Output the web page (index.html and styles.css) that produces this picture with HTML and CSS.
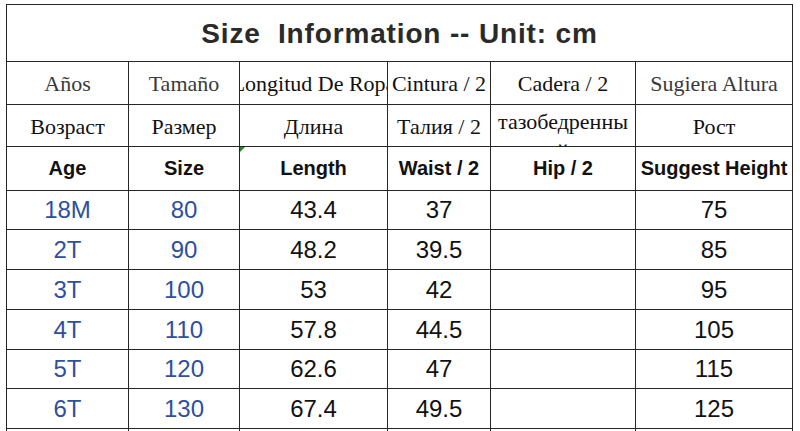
FILE: index.html
```html
<!DOCTYPE html>
<html>
<head>
<meta charset="utf-8">
<link rel="stylesheet" href="styles.css">
</head>
<body>
<div class="sheet">
  <div class="cell title r-title">Size  Information -- Unit: cm</div>

  <div class="cell serif grey r-es">Años</div>
  <div class="cell serif grey r-es">Tamaño</div>
  <div class="cell serif r-es">Longitud De Ropa</div>
  <div class="cell serif r-es">Cintura / 2</div>
  <div class="cell serif r-es">Cadera / 2</div>
  <div class="cell serif grey r-es">Sugiera Altura</div>

  <div class="cell serif r-ru">Возраст</div>
  <div class="cell serif r-ru">Размер</div>
  <div class="cell serif r-ru">Длина</div>
  <div class="cell serif r-ru">Талия / 2</div>
  <div class="cell serif r-ru wrapcell"><span class="wrap">тазобедренный</span></div>
  <div class="cell serif r-ru">Рост</div>

  <div class="cell head r-en">Age</div>
  <div class="cell head r-en">Size</div>
  <div class="cell head r-en flag">Length</div>
  <div class="cell head r-en">Waist / 2</div>
  <div class="cell head r-en">Hip / 2</div>
  <div class="cell head r-en">Suggest Height</div>

  <div class="cell num blue h39">18M</div>
  <div class="cell num blue h39">80</div>
  <div class="cell num h39">43.4</div>
  <div class="cell num h39">37</div>
  <div class="cell num h39"></div>
  <div class="cell num h39">75</div>

  <div class="cell num blue">2T</div>
  <div class="cell num blue">90</div>
  <div class="cell num">48.2</div>
  <div class="cell num">39.5</div>
  <div class="cell num"></div>
  <div class="cell num">85</div>

  <div class="cell num blue">3T</div>
  <div class="cell num blue">100</div>
  <div class="cell num">53</div>
  <div class="cell num">42</div>
  <div class="cell num"></div>
  <div class="cell num">95</div>

  <div class="cell num blue">4T</div>
  <div class="cell num blue">110</div>
  <div class="cell num">57.8</div>
  <div class="cell num">44.5</div>
  <div class="cell num"></div>
  <div class="cell num">105</div>

  <div class="cell num blue h39">5T</div>
  <div class="cell num blue h39">120</div>
  <div class="cell num h39">62.6</div>
  <div class="cell num h39">47</div>
  <div class="cell num h39"></div>
  <div class="cell num h39">115</div>

  <div class="cell num blue">6T</div>
  <div class="cell num blue">130</div>
  <div class="cell num">67.4</div>
  <div class="cell num">49.5</div>
  <div class="cell num"></div>
  <div class="cell num">125</div>

  <div class="cell num blue"></div>
  <div class="cell num blue"></div>
  <div class="cell num"></div>
  <div class="cell num"></div>
  <div class="cell num"></div>
  <div class="cell num"></div>
</div>
</body>
</html>
```

FILE: styles.css
```css
html, body {
  margin: 0;
  padding: 0;
  background: #ffffff;
}

body {
  padding: 4px 0 0 6px;
}

.sheet {
  display: grid;
  grid-template-columns: 122px 111px 148px 103px 145px 157px;
  width: 787px;
  border-top: 1px solid #262626;
  border-left: 1px solid #262626;
  box-sizing: border-box;
}

.cell {
  box-sizing: border-box;
  border-right: 1px solid #262626;
  border-bottom: 1px solid #262626;
  height: 40px;
  display: flex;
  align-items: center;
  justify-content: center;
  overflow: hidden;
  white-space: nowrap;
  position: relative;
  color: #111;
}

.h39 { height: 39px; }

.r-title {
  grid-column: 1 / -1;
  height: 57px;
  font-family: "Liberation Sans", Arial, sans-serif;
  font-weight: bold;
  font-size: 28px;
  color: #2a2a2a;
  white-space: pre;
  letter-spacing: 0.85px;
  padding-top: 2px;
}

.serif {
  font-family: "Liberation Serif", "Times New Roman", serif;
  font-size: 22px;
}

.grey { color: #3a3a3a; }

.r-es { height: 43px; padding-top: 2px; }
.r-ru { height: 42px; padding-top: 2px; }

.wrapcell {
  align-items: flex-start;
  padding-top: 2px;
}

.wrap {
  display: block;
  width: 136px;
  white-space: normal;
  word-break: break-all;
  text-align: center;
  line-height: 30px;
}

.head {
  height: 44px;
  font-family: "Liberation Sans", Arial, sans-serif;
  font-weight: bold;
  font-size: 20px;
  color: #111;
}

.num {
  font-family: "Liberation Sans", Arial, sans-serif;
  font-size: 24px;
  color: #111;
}

.blue { color: #2f4f9d; }

.flag::before {
  content: "";
  position: absolute;
  left: 0;
  top: 0;
  border-top: 5px solid #1f8a1f;
  border-right: 5px solid transparent;
}
```
